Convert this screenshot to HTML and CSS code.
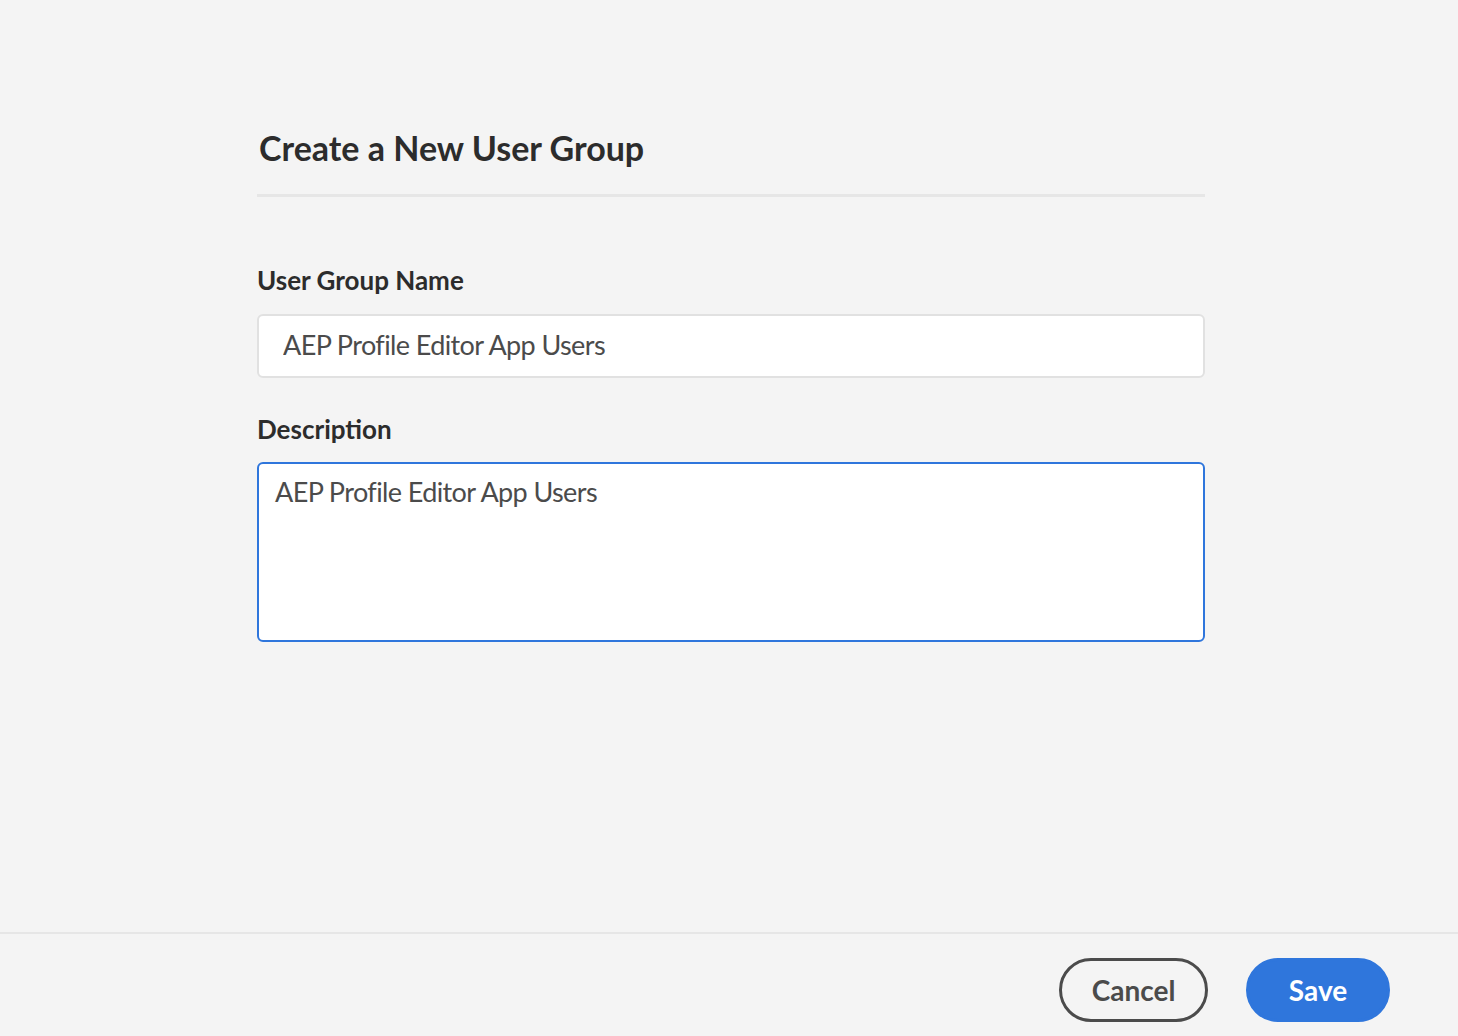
FILE: index.html
```html
<!DOCTYPE html>
<html lang="en">
<head>
<meta charset="utf-8">
<title>Create a New User Group</title>
<link rel="stylesheet" href="styles.css">
</head>
<body>
<div class="page">
  <main class="content">
    <h1 class="title">Create a New User Group</h1>
    <div class="divider"></div>
    <label class="label label-first" for="name">User Group Name</label>
    <input class="field" id="name" type="text" value="AEP Profile Editor App Users">
    <label class="label label-second" for="desc">Description</label>
    <textarea class="area" id="desc">AEP Profile Editor App Users</textarea>
  </main>
  <footer class="footer">
    <button class="btn btn-cancel" type="button">Cancel</button>
    <button class="btn btn-save" type="button">Save</button>
  </footer>
</div>
</body>
</html>
```
FILE: styles.css
```css
* { box-sizing: border-box; }
html, body { margin: 0; padding: 0; }
body {
  background: #f4f4f4;
  font-family: Lato, "Open Sans", sans-serif;
  color: #2c2c2c;
}
.page {
  height: 1036px;
  display: flex;
  flex-direction: column;
}
.content {
  flex: 1;
  display: flex;
  flex-direction: column;
  padding: 128px 253px 0 257px;
}
.title {
  margin: 0 0 0 2px;
  font-size: 34px;
  line-height: 40px;
  font-weight: 700;
  color: #2c2c2c;
}
.divider {
  margin-top: 26px;
  height: 3px;
  background: #e6e6e6;
}
.label {
  display: block;
  font-size: 26px;
  line-height: 30px;
  font-weight: 700;
  color: #2c2c2c;
}
.label-first { margin-top: 68px; margin-bottom: 19px; }
.label-second { margin-top: 36px; margin-bottom: 18px; }
.field {
  display: block;
  width: 100%;
  height: 64px;
  margin: 0;
  border: 2px solid #e1e1e1;
  border-radius: 6px;
  background: #fff;
  padding: 0 24px 3px;
  font-family: Lato, "Open Sans", sans-serif;
  font-size: 27px;
  letter-spacing: -0.6px;
  color: #4b4b4b;
  outline: none;
}
.area {
  display: block;
  width: 100%;
  height: 180px;
  margin: 0;
  border: 2px solid #2f76dc;
  border-radius: 6px;
  background: #fff;
  padding: 11px 16px;
  font-family: Lato, "Open Sans", sans-serif;
  font-size: 27px;
  letter-spacing: -0.6px;
  line-height: 34px;
  color: #4b4b4b;
  resize: none;
  outline: none;
}
.footer {
  height: 104px;
  border-top: 2px solid #e6e6e6;
  display: flex;
  justify-content: flex-end;
  align-items: flex-start;
  gap: 38px;
  padding: 24px 68px 0 0;
}
.btn {
  height: 64px;
  border-radius: 32px;
  font-family: Lato, "Open Sans", sans-serif;
  font-size: 28px;
  font-weight: 700;
  padding: 0;
  cursor: pointer;
}
.btn-cancel {
  width: 149px;
  background: transparent;
  border: 3px solid #4b4b4b;
  color: #4b4b4b;
}
.btn-save {
  width: 144px;
  background: #2f76dc;
  border: 3px solid #2f76dc;
  color: #fff;
}
```
